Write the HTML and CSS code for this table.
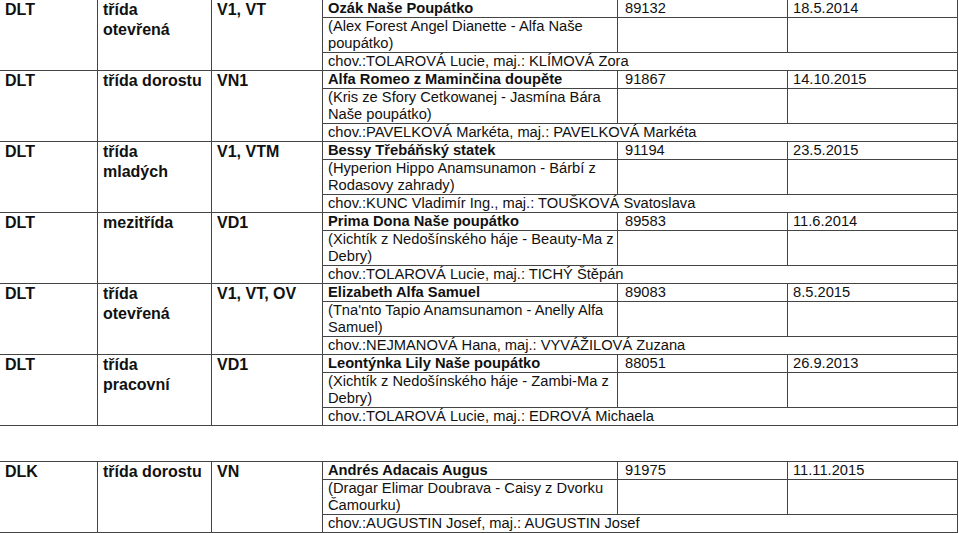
FILE: index.html
```html
<!DOCTYPE html>
<html lang="cs">
<head>
<meta charset="utf-8">
<title>Výsledky</title>
<link rel="stylesheet" href="styles.css">
</head>
<body>
<table class="results">
  <colgroup>
    <col class="w1"><col class="w2"><col class="w3"><col class="w4"><col class="w5"><col class="w6">
  </colgroup>
  <tbody>
    <tr class="head">
      <td rowspan="3" class="cat">DLT</td>
      <td rowspan="3" class="cat">třída otevřená</td>
      <td rowspan="3" class="cat">V1, VT</td>
      <td class="name">Ozák Naše Poupátko</td>
      <td class="num">89132</td>
      <td>18.5.2014</td>
    </tr>
    <tr class="desc">
      <td>(Alex Forest Angel Dianette - Alfa Naše poupátko)</td>
      <td></td><td></td>
    </tr>
    <tr class="own">
      <td colspan="3">chov.:TOLAROVÁ Lucie, maj.: KLÍMOVÁ Zora</td>
    </tr>

    <tr class="head">
      <td rowspan="3" class="cat">DLT</td>
      <td rowspan="3" class="cat">třída dorostu</td>
      <td rowspan="3" class="cat">VN1</td>
      <td class="name">Alfa Romeo z Maminčina doupěte</td>
      <td class="num">91867</td>
      <td>14.10.2015</td>
    </tr>
    <tr class="desc">
      <td>(Kris ze Sfory Cetkowanej - Jasmína Bára Naše poupátko)</td>
      <td></td><td></td>
    </tr>
    <tr class="own">
      <td colspan="3">chov.:PAVELKOVÁ Markéta, maj.: PAVELKOVÁ Markéta</td>
    </tr>

    <tr class="head">
      <td rowspan="3" class="cat">DLT</td>
      <td rowspan="3" class="cat">třída mladých</td>
      <td rowspan="3" class="cat">V1, VTM</td>
      <td class="name">Bessy Třebáňský statek</td>
      <td class="num">91194</td>
      <td>23.5.2015</td>
    </tr>
    <tr class="desc">
      <td>(Hyperion Hippo Anamsunamon - Bárbí z Rodasovy zahrady)</td>
      <td></td><td></td>
    </tr>
    <tr class="own">
      <td colspan="3">chov.:KUNC Vladimír Ing., maj.: TOUŠKOVÁ Svatoslava</td>
    </tr>

    <tr class="head">
      <td rowspan="3" class="cat">DLT</td>
      <td rowspan="3" class="cat">mezitřída</td>
      <td rowspan="3" class="cat">VD1</td>
      <td class="name">Prima Dona Naše poupátko</td>
      <td class="num">89583</td>
      <td>11.6.2014</td>
    </tr>
    <tr class="desc">
      <td>(Xichtík z Nedošínského háje - Beauty-Ma z Debry)</td>
      <td></td><td></td>
    </tr>
    <tr class="own">
      <td colspan="3">chov.:TOLAROVÁ Lucie, maj.: TICHÝ Štěpán</td>
    </tr>

    <tr class="head">
      <td rowspan="3" class="cat">DLT</td>
      <td rowspan="3" class="cat">třída otevřená</td>
      <td rowspan="3" class="cat">V1, VT, OV</td>
      <td class="name">Elizabeth Alfa Samuel</td>
      <td class="num">89083</td>
      <td>8.5.2015</td>
    </tr>
    <tr class="desc">
      <td>(Tna'nto Tapio Anamsunamon - Anelly Alfa Samuel)</td>
      <td></td><td></td>
    </tr>
    <tr class="own">
      <td colspan="3">chov.:NEJMANOVÁ Hana, maj.: VYVÁŽILOVÁ Zuzana</td>
    </tr>

    <tr class="head">
      <td rowspan="3" class="cat">DLT</td>
      <td rowspan="3" class="cat">třída pracovní</td>
      <td rowspan="3" class="cat">VD1</td>
      <td class="name">Leontýnka Lily Naše poupátko</td>
      <td class="num">88051</td>
      <td>26.9.2013</td>
    </tr>
    <tr class="desc">
      <td>(Xichtík z Nedošínského háje - Zambi-Ma z Debry)</td>
      <td></td><td></td>
    </tr>
    <tr class="own">
      <td colspan="3">chov.:TOLAROVÁ Lucie, maj.: EDROVÁ Michaela</td>
    </tr>
  </tbody>
</table>

<table class="results second">
  <colgroup>
    <col class="w1"><col class="w2"><col class="w3"><col class="w4"><col class="w5"><col class="w6">
  </colgroup>
  <tbody>
    <tr class="head">
      <td rowspan="3" class="cat">DLK</td>
      <td rowspan="3" class="cat">třída dorostu</td>
      <td rowspan="3" class="cat">VN</td>
      <td class="name">Andrés Adacais Augus</td>
      <td class="num">91975</td>
      <td>11.11.2015</td>
    </tr>
    <tr class="desc">
      <td>(Dragar Elimar Doubrava - Caisy z Dvorku Čamourku)</td>
      <td></td><td></td>
    </tr>
    <tr class="own">
      <td colspan="3">chov.:AUGUSTIN Josef, maj.: AUGUSTIN Josef</td>
    </tr>
  </tbody>
</table>
</body>
</html>
```
FILE: styles.css
```css
html, body {
  margin: 0;
  padding: 0;
  background: #fff;
}

body {
  font-family: "Liberation Sans", Arial, sans-serif;
  font-size: 14.7px;
  line-height: 17px;
  color: #111;
}

.results {
  border-collapse: collapse;
  table-layout: fixed;
  width: 958px;
  margin: -1px 0 0 -1px;
}

.results.second {
  margin-top: 35px;
}

.w1 { width: 98px; }
.w2 { width: 114px; }
.w3 { width: 111px; }
.w4 { width: 295px; }
.w5 { width: 170px; }
.w6 { width: 170px; }

.results td {
  border: 1px solid #444;
  padding: 0 2px 0 5px;
  vertical-align: top;
  text-align: left;
}

.results td.cat {
  font-weight: bold;
  font-size: 16px;
  line-height: 20px;
  padding-right: 4px;
}

.results td.name {
  font-weight: bold;
}

.results td.num {
  padding-left: 7px;
}

.results tr.desc td {
  height: 34px;
}
```
